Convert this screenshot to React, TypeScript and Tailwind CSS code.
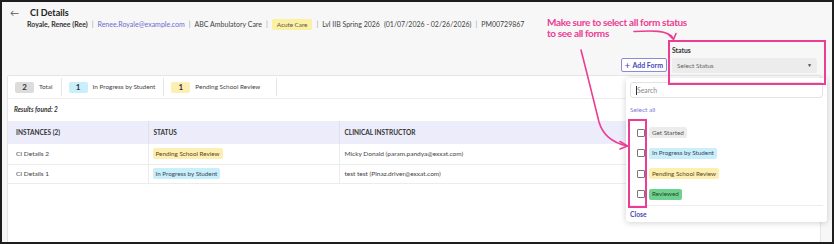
import React from 'react';

const font = { fontFamily: 'Lato, "Open Sans", sans-serif' };

// 状态徽章
function Badge({ label, tone }: { label: string; tone: 'gray' | 'blue' | 'yellow' | 'green' }) {
  const toneClass =
    tone === 'gray'
      ? 'bg-[#ececec] text-[#555]'
      : tone === 'blue'
      ? 'bg-[#c8effb] text-[#3b4a55]'
      : tone === 'yellow'
      ? 'bg-[#fdefb2] text-[#5a4a1a]'
      : 'bg-[#6fd18f] text-[#1f4a2c]';
  return <span className={`inline-block px-[3px] py-[1.5px] text-[6.3px] leading-[8px] rounded-[2px] ${toneClass}`}>{label}</span>;
}

function StatItem({ count, label, tone, last }: { count: number; label: string; tone: string; last?: boolean }) {
  return (
    <div className={`flex items-center gap-[5px] pl-[7px] border-r border-[#e6e6e6] h-[18px] ${last ? 'pr-[16px]' : 'pr-[8px]'}`}>
      <span className={`w-[19px] h-[11px] rounded-[2px] flex items-center justify-center text-[8px] font-bold text-[#333] ${tone}`}>{count}</span>
      <span className="text-[6.4px] text-[#444]">{label}</span>
    </div>
  );
}

export default function App() {
  const options: { label: string; tone: 'gray' | 'blue' | 'yellow' | 'green' }[] = [
    { label: 'Get Started', tone: 'gray' },
    { label: 'In Progress by Student', tone: 'blue' },
    { label: 'Pending School Review', tone: 'yellow' },
    { label: 'Reviewed', tone: 'green' },
  ];

  return (
    <div className="relative w-[834px] h-[244px] overflow-hidden border-2 border-[#1e1e1e] bg-[#f7f7f7] text-[#333]" style={font}>
      {/* 头部 */}
      <div className="flex pl-[8px] pt-[5px]">
        <span className="text-[9px] leading-[11px] text-[#555]">←</span>
        <div className="ml-[11px]">
          <div className="text-[9px] font-bold leading-[11px] text-[#222]">CI Details</div>
          <div className="flex items-center text-[7px] leading-[11px] text-[#444] mt-[1px] -ml-[3px]">
            <span className="font-bold text-[#333]">Royale, Renee (Ree)</span>
            <span className="mx-[4px] text-[#999]">|</span>
            <span className="text-[#6b6bd0]">Renee.Royale@example.com</span>
            <span className="mx-[4px] text-[#999]">|</span>
            <span>ABC Ambulatory Care</span>
            <span className="mx-[4px] text-[#999]">|</span>
            <span className="bg-[#fcf0a2] px-[5px] py-[1.5px] rounded-[2px] text-[6.3px] leading-[8px] text-[#555]">Acute Care</span>
            <span className="mx-[4px] text-[#999]">|</span>
            <span>Lvl IIB Spring 2026</span>
            <span className="ml-[4px]">(01/07/2026 - 02/26/2026)</span>
            <span className="mx-[4px] text-[#999]">|</span>
            <span>PM00729867</span>
          </div>
        </div>
      </div>

      {/* 工具栏 */}
      <div className="flex justify-end items-end pr-[15px] mt-[16px]">
        <button className="flex items-center gap-[2px] h-[14px] px-[3px] border border-[#8a8ad8] rounded-[2px] bg-white text-[#4747b8] text-[7px] font-bold mb-[1px]">
          <span className="text-[10px] font-normal leading-[10px]">+</span>Add Form
        </button>
        <div className="ml-[5px] w-[145px]">
          <div className="text-[6.8px] leading-[8px] font-bold text-[#333] mb-[4px]">Status</div>
          <div className="h-[15px] bg-[#ececec] rounded-[2px] flex items-center justify-between px-[5px]">
            <span className="text-[6.5px] text-[#666]">Select Status</span>
            <span className="text-[5px] text-[#444]">▼</span>
          </div>
        </div>
      </div>

      {/* 主卡片 */}
      <div className="ml-[5px] mr-[11px] mt-[2px] h-[170px] bg-white border border-[#e5e5e5] rounded-t-[2px]">
        <div className="flex items-center h-[23px] border-b border-[#ececec]">
          <StatItem count={2} label="Total" tone="bg-[#dcdcdc]" />
          <StatItem count={1} label="In Progress by Student" tone="bg-[#c8effb]" />
          <StatItem count={1} label="Pending School Review" tone="bg-[#fdefb2]" last />
        </div>
        <div className="h-[22px] flex items-center pl-[6px] text-[6.5px] font-bold italic text-[#333]">Results found: 2</div>
        <table className="w-full border-collapse text-[6.5px]">
          <thead>
            <tr className="bg-[#ececfa] h-[23px] text-left">
              <th className="w-[140px] pl-[8px] font-bold text-[#333] border-r border-[#e0e0ea]">INSTANCES (2)</th>
              <th className="w-[191px] pl-[5px] font-bold text-[#333] border-r border-[#e0e0ea]">STATUS</th>
              <th className="pl-[5px] font-bold text-[#333]">CLINICAL INSTRUCTOR</th>
            </tr>
          </thead>
          <tbody className="text-[#444]">
            <tr className="h-[20px] border-b border-[#ececec]">
              <td className="pl-[8px] border-r border-[#ececec]">CI Details 2</td>
              <td className="pl-[4px] border-r border-[#ececec]"><Badge label="Pending School Review" tone="yellow" /></td>
              <td className="pl-[5px]">Micky Donald (param.pandya@exxat.com)</td>
            </tr>
            <tr className="h-[19px] border-b border-[#ececec]">
              <td className="pl-[8px] border-r border-[#ececec]">CI Details 1</td>
              <td className="pl-[4px] border-r border-[#ececec]"><Badge label="In Progress by Student" tone="blue" /></td>
              <td className="pl-[5px]">test test (Pinaz.driver@exxat.com)</td>
            </tr>
          </tbody>
        </table>
      </div>

      {/* 下拉菜单 */}
      <div className="absolute left-[624px] top-[76px] w-[201px] h-[144px] bg-white rounded-[3px] shadow-[0_1px_6px_rgba(0,0,0,0.18)] px-[4px] pt-[4px]">
        <div className="h-[16px] border border-[#e2e2e2] rounded-[3px] flex items-center px-[5px] text-[6.8px] text-[#888]">
          <span className="w-[1px] h-[9px] bg-[#333]" />Search
        </div>
        <div className="mt-[7px] text-[6.5px] leading-[9px] text-[#7b7bd8]">Select all</div>
        <div className="mt-[13px] flex flex-col gap-[9.5px] pl-[7px]">
          {options.map((o) => (
            <div key={o.label} className="flex items-center gap-[4px] h-[11px]">
              <span className="w-[8px] h-[8px] border border-[#777] rounded-[1px] bg-white" />
              <Badge label={o.label} tone={o.tone} />
            </div>
          ))}
        </div>
        <div className="mt-[5px] border-t border-[#ececec] pt-[3px] text-[6.8px] font-bold text-[#4b4bb5]">Close</div>
      </div>

      {/* 标注 */}
      <div className="absolute left-[545px] top-[15px] text-[10px] leading-[11px] tracking-[-0.35px] font-bold text-[#ec3d94]">
        <div>Make sure to select all form status</div>
        <div>to see all forms</div>
      </div>
      <div className="absolute left-[666px] top-[38px] w-[158px] h-[45px] border-2 border-[#ec3d94]" />
      <div className="absolute left-[626px] top-[117px] w-[19px] h-[89px] border-2 border-[#ec3d94]" />
      <svg className="absolute left-0 top-0" width="834" height="244" viewBox="0 0 834 244" fill="none">
        <path d="M632 29.5 C650 28.5 666 28 671 36" stroke="#ec3d94" strokeWidth="1.6" strokeLinecap="round" />
        <path d="M667 33 L671.5 37.5 L674 31.5" stroke="#ec3d94" strokeWidth="1.6" strokeLinecap="round" strokeLinejoin="round" />
        <path d="M579 48 C586 75 592 100 597 120 C601 134 612 141 625 144" stroke="#ec3d94" strokeWidth="1.6" strokeLinecap="round" />
        <path d="M618 139.5 L625.5 144 L618 147" stroke="#ec3d94" strokeWidth="1.6" strokeLinecap="round" strokeLinejoin="round" />
      </svg>
    </div>
  );
}
